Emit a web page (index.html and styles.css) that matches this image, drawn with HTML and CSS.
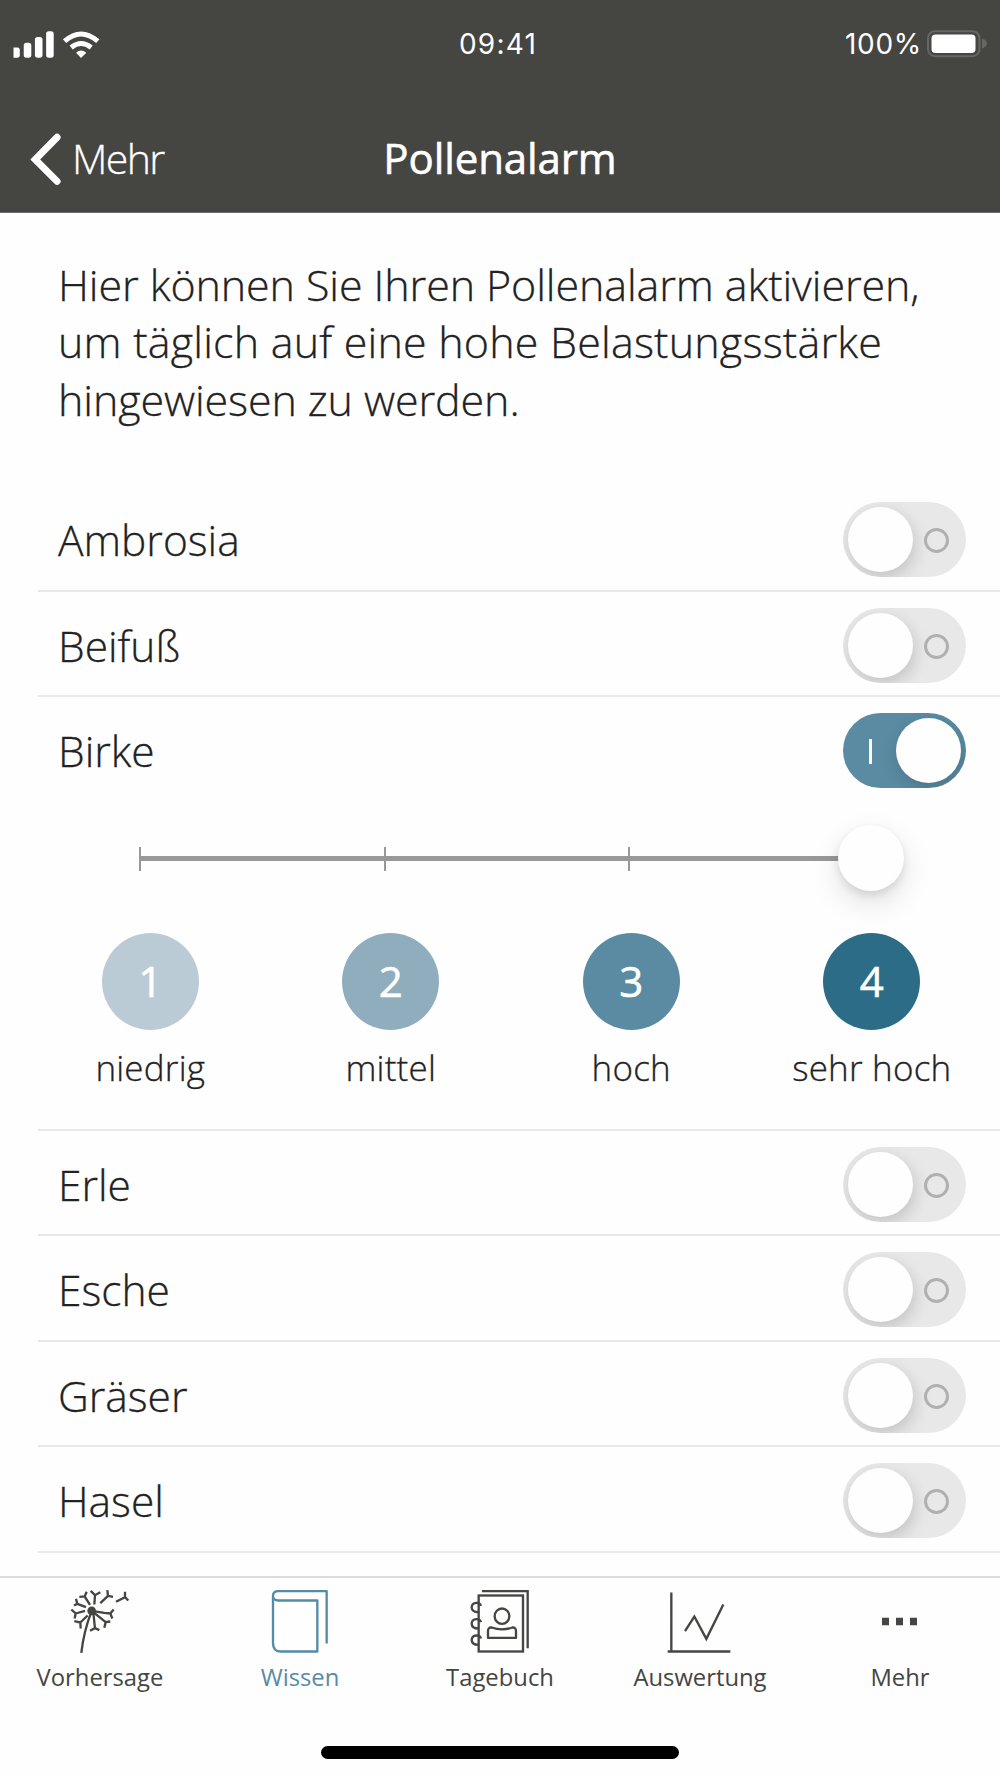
FILE: index.html
```html
<!DOCTYPE html>
<html lang="de">

<head>
    <meta charset="UTF-8">
    <meta name="viewport" content="width=device-width, initial-scale=1.0">
    <title>Pollenalarm</title>
    <link rel="stylesheet" href="styles.css">
</head>

<body>
    <header class="header">
        <div class="status-bar">
            <svg class="signal-icon" viewBox="39 90 261 82" fill="#fff">
                <path d="M39 140h12q7 0 7 7v17q0 7-7 7H39z"/>
                <rect x="70" y="126" width="23" height="45" rx="8"/>
                <rect x="104" y="108" width="23" height="63" rx="8"/>
                <rect x="138" y="91" width="23" height="80" rx="8"/>
                <g fill="none" stroke="#fff" stroke-width="15">
                    <path d="M194 121Q244 77 295 121"/>
                    <path d="M214 140Q244 116 275 140"/>
                </g>
                <path d="M229 156Q244 143 260 156L244 172z"/>
            </svg>
            <span class="status-time">09:41</span>
            <div class="status-right">
                <span class="battery-text">100%</span>
                <svg class="battery-icon" viewBox="0 0 62 28">
                    <rect x="1" y="1.2" width="51.5" height="25" rx="7" fill="none" stroke="#666663" stroke-width="2"/>
                    <rect x="4.5" y="4.5" width="44" height="18.5" rx="4" fill="#fff"/>
                    <path d="M55 8.500q5 2 5 5t-5 5z" fill="#666663"/>
                </svg>
            </div>
        </div>
        <nav class="nav-bar">
            <a class="back-link" href="#">
                <svg class="chevron-icon" viewBox="90 400 95 160">
                    <path d="M171 413L105 480L171 546" fill="none" stroke="#fff" stroke-width="21" stroke-linecap="round" stroke-linejoin="miter"/>
                </svg>
                <span class="back-text">Mehr</span>
            </a>
            <h1>Pollenalarm</h1>
        </nav>
    </header>

    <main class="content">
        <p class="intro">
            <span>Hier können Sie Ihren Pollenalarm aktivieren,</span>
            <span class="wide">um täglich auf eine hohe Belastungsstärke</span>
            <span>hingewiesen zu werden.</span>
        </p>

        <ul class="pollen-list">
            <li>
                <div class="pollen-row"><span>Ambrosia</span><button class="toggle"></button></div>
            </li>
            <li>
                <div class="pollen-row"><span>Beifuß</span><button class="toggle"></button></div>
            </li>
            <li class="expanded">
                <div class="pollen-row"><span>Birke</span><button class="toggle on"></button></div>
                <div class="slider">
                    <i class="tick"></i>
                    <i class="tick"></i>
                    <i class="tick"></i>
                    <span class="slider-knob"></span>
                </div>
                <div class="levels">
                    <div class="level level-1"><b>1</b><span>niedrig</span></div>
                    <div class="level level-2"><b>2</b><span>mittel</span></div>
                    <div class="level level-3"><b>3</b><span>hoch</span></div>
                    <div class="level level-4"><b>4</b><span>sehr hoch</span></div>
                </div>
            </li>
            <li>
                <div class="pollen-row"><span>Erle</span><button class="toggle"></button></div>
            </li>
            <li>
                <div class="pollen-row"><span>Esche</span><button class="toggle"></button></div>
            </li>
            <li>
                <div class="pollen-row"><span>Gräser</span><button class="toggle"></button></div>
            </li>
            <li>
                <div class="pollen-row"><span>Hasel</span><button class="toggle"></button></div>
            </li>
        </ul>
    </main>

    <footer class="tab-bar">
        <div class="tabs">
            <a class="tab" href="#">
                <!-- Dandelion -->
                <svg class="tab-icon" viewBox="140 85 201 200" fill="none" stroke="currentColor" stroke-width="7">
                    <circle cx="214" cy="153" r="13" fill="currentColor" stroke="none"/>
                    <path d="M214 153Q190 215 183 279"/>
                    <path d="M214 153L252 159L270 161M280 149L270 161L276 176"/>
                    <path d="M214 153L256 187M270 185L256 187L252 204"/>
                    <path d="M219 158L224 206M209 213L224 205L237 211"/>
                    <path d="M202 167L180 188M162 184L180 188L181 206"/>
                    <path d="M194 153L166 161M153 149L166 161L163 176"/>
                    <path d="M197 142L171 132M167 117L171 132L161 137"/>
                    <path d="M209 135L193 110M177 111L193 110L199 96"/>
                    <path d="M222 134L224 106M211 93L224 106L240 97"/>
                    <path d="M240 130L263 108M261 91L263 108L278 111"/>
                    <path d="M287 126L314 112M314 96L314 112L324 122"/>
                </svg>
                <span>Vorhersage</span>
            </a>
            <a class="tab active" href="#">
                <!-- Book -->
                <svg class="tab-icon" viewBox="740 85 201 200" fill="none" stroke="currentColor" stroke-width="7">
                    <path d="M758 108V250Q758 275 782 275H891V122H774Q758 122 758 108Q758 94 774 94H919V251" stroke-linejoin="round"/>
                </svg>
                <span>Wissen</span>
            </a>
            <a class="tab" href="#">
                <!-- Contact book -->
                <svg class="tab-icon" viewBox="110 85 201 200" fill="none" stroke="currentColor" stroke-width="7">
                    <rect x="145" y="107" width="133" height="168"/>
                    <path d="M155 94H292V265"/>
                    <path d="M152 138Q149 128 138 129Q124 130 124 143Q125 157 144 157M152 187Q149 177 138 178Q124 179 124 192Q125 206 144 206M152 236Q149 226 138 227Q124 228 124 241Q125 255 144 255"/>
                    <ellipse cx="215" cy="169" rx="22" ry="23"/>
                    <path d="M173 234V214Q173 202 184 203Q215 214 246 203Q257 202 257 214V234z" stroke-linejoin="round"/>
                </svg>
                <span>Tagebuch</span>
            </a>
            <a class="tab" href="#">
                <!-- Chart -->
                <svg class="tab-icon" viewBox="710 85 201 200" fill="none" stroke="currentColor" stroke-width="7">
                    <path d="M723 98V275M712 275H900M764 214L792 170L828 237L879 134"/>
                </svg>
                <span>Auswertung</span>
            </a>
            <a class="tab" href="#">
                <svg class="tab-icon" viewBox="201 145 201 200" fill="currentColor">
                    <path d="M246 234h21v22h-21zM288 234h21v22h-21zM330 234h21v22h-21z"/>
                </svg>
                <span>Mehr</span>
            </a>
        </div>
        <div class="home-indicator"></div>
    </footer>
</body>

</html>
```

FILE: styles.css
```css
/* General Reset */
*,
*::before,
*::after {
    margin: 0;
    padding: 0;
    box-sizing: border-box;
}

body {
    width: 1000px;
    height: 1778px;
    display: flex;
    flex-direction: column;
    overflow: hidden;
    background: #fefefe;
    color: #222;
    font-family: 'Open Sans', 'Noto Sans', sans-serif;
    font-weight: 300;
}

a {
    color: inherit;
    text-decoration: none;
}

/* Header */
.header {
    height: 213px;
    background: #454541;
    border-bottom: 1px solid #6c6c68;
    color: #fff;
}

.status-bar {
    height: 88px;
    padding: 0 12px 0 13px;
    display: grid;
    grid-template-columns: 1fr auto 1fr;
    align-items: center;
    font-family: 'Inter', sans-serif;
    font-weight: 400;
    font-size: 28px;
}

.signal-icon {
    display: block;
    width: 87px;
    height: 27px;
}

.status-time {
    margin-right: 5px;
    letter-spacing: 1.2px;
}

.status-right {
    display: flex;
    align-items: center;
    justify-content: flex-end;
    gap: 5px;
}

.battery-text {
    letter-spacing: 0.7px;
}

.battery-icon {
    width: 62px;
    height: 28px;
    margin-right: -1px;
}

.nav-bar {
    height: 123px;
    padding: 0 30px;
    display: grid;
    grid-template-columns: 1fr auto 1fr;
    align-items: center;
}

.back-link {
    display: flex;
    align-items: center;
    gap: 10px;
    padding-top: 20px;
}

.chevron-icon {
    width: 32px;
    height: 53px;
}

.back-text {
    margin-top: -3px;
    font-size: 41px;
    line-height: 50px;
    letter-spacing: -1.6px;
    -webkit-text-stroke: 0.3px currentColor;
}

h1 {
    padding-top: 17px;
    font-size: 42px;
    line-height: 50px;
    font-weight: 400;
    letter-spacing: -0.1px;
    -webkit-text-stroke: 0.6px currentColor;
}

/* Intro */
.content {
    flex: 1;
}

.intro {
    height: 273px;
    padding: 43px 58px 0;
    font-size: 43px;
    line-height: 57.3px;
    white-space: nowrap;
    -webkit-text-stroke: 0.3px currentColor;
}

.intro span {
    display: block;
    letter-spacing: -0.1px;
}

.intro .wide {
    letter-spacing: 0.2px;
}

/* Pollen list */
.pollen-list {
    list-style: none;
    margin-left: 38px;
    -webkit-text-stroke: 0.3px currentColor;
}

.pollen-list li {
    height: 105.5px;
    border-bottom: 2px solid #e8e8e8;
}

.pollen-list li.expanded {
    height: 433.5px;
}

.pollen-row {
    height: 103.5px;
    padding: 4px 34px 0 20px;
    display: flex;
    align-items: center;
    justify-content: space-between;
    font-size: 42.5px;
}

.toggle {
    width: 123px;
    height: 75px;
    padding: 0 17px 0 5px;
    border: none;
    border-radius: 38px;
    background: #e8e8e8;
    display: flex;
    align-items: center;
    justify-content: space-between;
    overflow: hidden;
}

.toggle::before {
    content: "";
    width: 65px;
    height: 65px;
    border-radius: 50%;
    background: #fefefe;
    box-shadow: 2px 6px 16px rgba(0, 0, 0, 0.16);
}

.toggle::after {
    content: "";
    width: 25px;
    height: 25px;
    margin-top: 2px;
    border: 3px solid #b0b0b0;
    border-radius: 50%;
}

.toggle.on {
    flex-direction: row-reverse;
    padding: 0 5px 0 26px;
    background: #5a8ba2;
}

.toggle.on::after {
    width: 3px;
    border: none;
    border-radius: 0;
    background: #fff;
}

/* Strength slider */
.slider {
    width: 766px;
    height: 66px;
    margin: 24px 0 0 101px;
    display: flex;
    align-items: center;
    background: linear-gradient(#989898, #989898) 0 31px / 720px 5px no-repeat;
}

.tick {
    flex: none;
    width: 2px;
    height: 24px;
    margin: 2px 242.5px 0 0;
    background: #989898;
}

.tick:nth-child(3) {
    margin-right: 208px;
}

.slider-knob {
    flex: none;
    width: 66px;
    height: 66px;
    border-radius: 50%;
    background: #fefefe;
    box-shadow: 0 12px 30px rgba(0, 0, 0, 0.12), 0 4px 8px rgba(0, 0, 0, 0.1);
}

.levels {
    width: 962px;
    margin: 42px 0 0 -8px;
    display: grid;
    grid-template-columns: repeat(4, 1fr);
}

.level {
    display: flex;
    flex-direction: column;
    align-items: center;
    gap: 15px;
    font-size: 35px;
    line-height: 46px;
    letter-spacing: 0.2px;
}

.level b {
    width: 97px;
    height: 97px;
    border-radius: 50%;
    color: #fff;
    font-size: 42px;
    font-weight: 400;
    line-height: 96px;
    text-align: center;
    -webkit-text-stroke: 0.6px currentColor;
}

.level-1 b {
    background: #bbcbd6;
}

.level-2 b {
    background: #90adbe;
}

.level-3 b {
    background: #5a8ba2;
}

.level-4 b {
    background: #2d6c87;
}

/* Tab bar */
.tab-bar {
    height: 202px;
    border-top: 2px solid #dcdcdc;
    background: #fefefe;
}

.tabs {
    height: 168px;
    display: grid;
    grid-template-columns: repeat(5, 1fr);
}

.tab {
    display: flex;
    flex-direction: column;
    align-items: center;
    padding-top: 10px;
    gap: 5px;
    color: #454541;
    font-size: 23.8px;
    font-weight: 400;
    line-height: 34px;
}

.tab.active {
    color: #548ba6;
}

.tab-icon {
    width: 67px;
    height: 67px;
}

.home-indicator {
    width: 358px;
    height: 13px;
    margin: 0 auto;
    border-radius: 7px;
    background: #000;
}
```
